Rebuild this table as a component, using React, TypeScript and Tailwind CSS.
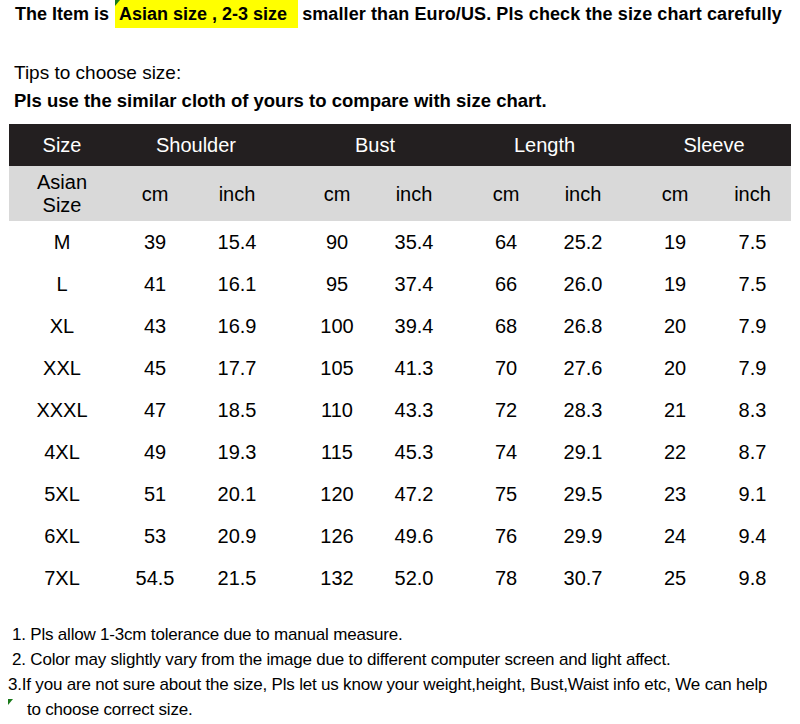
import React from 'react';

const rows: string[][] = [
  ['M', '39', '15.4', '90', '35.4', '64', '25.2', '19', '7.5'],
  ['L', '41', '16.1', '95', '37.4', '66', '26.0', '19', '7.5'],
  ['XL', '43', '16.9', '100', '39.4', '68', '26.8', '20', '7.9'],
  ['XXL', '45', '17.7', '105', '41.3', '70', '27.6', '20', '7.9'],
  ['XXXL', '47', '18.5', '110', '43.3', '72', '28.3', '21', '8.3'],
  ['4XL', '49', '19.3', '115', '45.3', '74', '29.1', '22', '8.7'],
  ['5XL', '51', '20.1', '120', '47.2', '75', '29.5', '23', '9.1'],
  ['6XL', '53', '20.9', '126', '49.6', '76', '29.9', '24', '9.4'],
  ['7XL', '54.5', '21.5', '132', '52.0', '78', '30.7', '25', '9.8'],
];

// nudges so the text sits where the chart has it
const cellPad = ['pl-[7px]', 'pl-[6px]', 'pr-[9px]', 'pl-[12px]', 'pr-[7px]', 'pl-[8px]', 'pr-[7px]', 'pl-[7px]', ''];

const cols = 'grid grid-cols-[99px_88px_91px_88px_85px_84px_85px_85px_77px]';

const Mark: React.FC<{ className?: string }> = ({ className }) => (
  <svg width="5" height="6" viewBox="0 0 5 6" className={className}>
    <polygon points="0,0 5,0 0,6" fill="#1a7a1a" />
  </svg>
);

const App: React.FC = () => {
  return (
    <div className="w-[800px] h-[724px] bg-white text-black font-['Liberation_Sans',Arial,sans-serif] overflow-hidden">
      {/* top notice */}
      <div className="relative flex items-center h-[28px] pl-[15px] text-[18px] font-bold whitespace-pre">
        <span>The Item is </span>
        <span className="relative bg-[#ffff00] h-[28px] flex items-center pl-[4px] pr-[11px] ml-[1px]">
          <Mark className="absolute left-0 top-0" />
          Asian size , 2-3 size
        </span>
        <span className="ml-[4px] tracking-[0.1px]">smaller than Euro/US. Pls check the size chart carefully</span>
      </div>

      <div className="pl-[14px] mt-[33px] text-[19px] leading-[24px]">Tips to choose size:</div>
      <div className="pl-[14px] mt-[4px] text-[18.5px] leading-[24px] font-bold">
        Pls use the similar cloth of yours to compare with size chart.
      </div>

      {/* size chart */}
      <div className="ml-[9px] mt-[11px] w-[782px] text-[20px]">
        <div className={`${cols} h-[42px] bg-[#231f20] text-white items-center text-center`}>
          <div className="pl-[7px]">Size</div>
          <div className="col-span-2 pr-[3px]">Shoulder</div>
          <div className="col-span-2 pl-[3px]">Bust</div>
          <div className="col-span-2">Length</div>
          <div className="col-span-2 pl-[8px]">Sleeve</div>
        </div>
        <div className={`${cols} h-[55px] bg-[#d9d9d9] items-center text-center`}>
          <div className="pl-[7px] leading-[23px]">
            Asian
            <br />
            Size
          </div>
          {['cm', 'inch', 'cm', 'inch', 'cm', 'inch', 'cm', 'inch'].map((t, i) => (
            <div key={i} className={cellPad[i + 1]}>
              {t}
            </div>
          ))}
        </div>
        {rows.map((r) => (
          <div key={r[0]} className={`${cols} h-[42px] items-center text-center`}>
            {r.map((v, i) => (
              <div key={i} className={cellPad[i]}>
                {v}
              </div>
            ))}
          </div>
        ))}
      </div>

      {/* notes */}
      <div className="relative mt-[23px] text-[17px] leading-[25px] font-['Liberation_Sans_Narrow','Liberation_Sans',sans-serif] tracking-[-0.2px]">
        <div className="pl-[12px]">1. Pls allow 1-3cm tolerance due to manual measure.</div>
        <div className="pl-[12px]">2. Color may slightly vary from the image due to different computer screen and light affect.</div>
        <div className="pl-[8px]">
          3.If you are not sure about the size, Pls let us know your weight,height, Bust,Waist info etc, We can help
        </div>
        <div className="relative pl-[27px]">
          <Mark className="absolute left-[8px] top-[2px]" />
          to choose correct size.
        </div>
      </div>
    </div>
  );
};

export default App;
